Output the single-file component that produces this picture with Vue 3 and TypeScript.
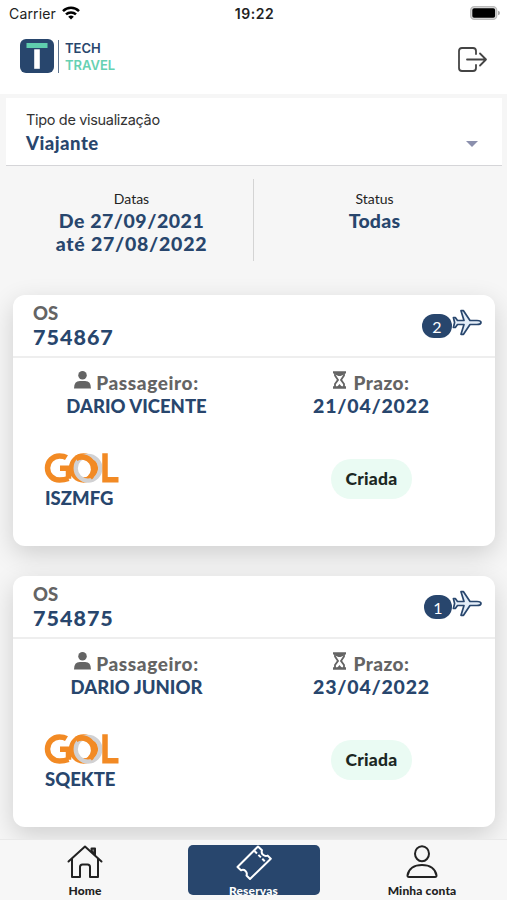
<script setup lang="ts">
interface Booking {
  os: string
  passenger: string
  deadline: string
  locator: string
  status: string
  flights: number
}

const bookings: Booking[] = [
  { os: '754867', passenger: 'DARIO VICENTE', deadline: '21/04/2022', locator: 'ISZMFG', status: 'Criada', flights: 2 },
  { os: '754875', passenger: 'DARIO JUNIOR', deadline: '23/04/2022', locator: 'SQEKTE', status: 'Criada', flights: 1 },
]
</script>

<template>
  <div class="screen">
    <div class="statusbar">
      <div class="carrier">
        <span>Carrier</span>
        <svg width="18" height="14" viewBox="0 0 18 14" fill="none" stroke="#000" stroke-width="2.5">
          <path d="M1 5.1a11.4 11.4 0 0 1 16 0M4 8.4a7.2 7.2 0 0 1 10 0" />
          <path d="M9 13.5 6.2 10.8a4 4 0 0 1 5.6 0z" fill="#000" stroke="none" />
        </svg>
      </div>
      <span class="time">19:22</span>
      <svg class="battery" width="30" height="14" viewBox="0 0 30 14">
        <rect x=".7" y=".7" width="26" height="12.6" rx="3.6" fill="#ddd" stroke="#bbb" stroke-width="1.3" />
        <rect x="2.3" y="2.3" width="22.8" height="9.4" rx="1.8" />
        <path d="M28 4.8q2 .4 2 2.2t-2 2.2z" fill="#aaa" />
      </svg>
    </div>

    <header class="header">
      <div class="brand">
        <svg width="34" height="34" viewBox="0 0 34 34">
          <rect width="34" height="34" rx="6" fill="#28466d" />
          <rect x="6.5" y="4" width="21" height="5" fill="#5fceae" />
          <rect x="14.2" y="10.3" width="5.6" height="19.5" fill="#fff" />
        </svg>
        <span class="brand-line"></span>
        <div class="brand-name"><span>TECH</span><span class="mint">TRAVEL</span></div>
      </div>
      <svg width="30" height="26" viewBox="0 0 30 26" fill="none" stroke="#444" stroke-width="1.8" stroke-linecap="round" stroke-linejoin="round">
        <path d="M18 7V4q0-3-3-3H4Q1 1 1 4v17q0 3 3 3h11q3 0 3-3v-3M9 12.5h19M22 6.5l6 6-6 6" />
      </svg>
    </header>

    <main class="content">
      <div class="select">
        <span class="select-label">Tipo de visualização</span>
        <div class="select-row"><strong>Viajante</strong><i class="caret"></i></div>
      </div>

      <div class="filters">
        <div class="filter">
          <span class="filter-label">Datas</span>
          <strong class="dates">De 27/09/2021</strong>
          <strong class="dates until">até 27/08/2022</strong>
        </div>
        <div class="filter">
          <span class="filter-label">Status</span>
          <strong class="all">Todas</strong>
        </div>
      </div>

      <div class="cards">
        <article v-for="b in bookings" :key="b.os" class="card">
          <div class="card-head">
            <div class="os"><span>OS</span><strong>{{ b.os }}</strong></div>
            <div class="flights">
              <span class="count" :class="{ single: b.flights === 1 }">{{ b.flights }}</span>
              <svg width="30" height="28" viewBox="0 0 30 28" fill="#e3edf8" stroke="#28466d" stroke-width="1.7" stroke-linejoin="round">
                <path d="M25 11.5h-7L11.5 1.7H9l3 9.8H5.5L3.3 8.5H1.4L2.6 13.5l-1.200 5h1.900l2.200-3H12l-3 9.800h2.500l6.500-9.800h7q4 0 4-2t-4-2z" />
              </svg>
            </div>
          </div>
          <div class="card-info">
            <div class="info">
              <span class="info-label">
                <svg width="17" height="18" viewBox="0 0 16 17" fill="#646464"><circle cx="8" cy="4.1" r="4" /><path d="M0 16.500q0-7 5.500-7h5Q16 9.500 16 16.500z" /></svg>
                Passageiro:
              </span>
              <strong class="passenger">{{ b.passenger }}</strong>
            </div>
            <div class="info">
              <span class="info-label">
                <svg width="13" height="18" viewBox="0 0 13 18" fill="none" stroke="#646464" stroke-width="1.800">
                  <path d="M0 1.300h13M0 16.500h13" stroke-width="2.300" /><path d="M2 1.500v3l3 4.400L2 13v3.500M11 1.500v3L8 8.900l3 4.100v3.500" /><path d="M3 2h7v2L7.500 5h-2L3 4zM4 16l2.500-3L9 16z" fill="#646464" stroke="none" />
                </svg>
                Prazo:
              </span>
              <strong class="deadline">{{ b.deadline }}</strong>
            </div>
          </div>
          <div class="card-foot">
            <div class="airline">
              <svg width="76" height="32" viewBox="0 0 76 32" fill="none" stroke-width="5.500" role="img" aria-label="Gol">
                <path d="M22.500 5.600Q20 4 15.500 4a12 12 0 0 0 0 24q5 0 9-1.500M16 16.300h8.500v10.500" stroke="#f28a24" />
                <circle cx="39.500" cy="16" r="11.900" stroke="#f28a24" />
                <circle cx="44" cy="16.300" r="12.300" stroke="#d1d1d3" stroke-width="4.300" />
                <path d="M32 6.500A11.900 11.900 0 0 1 46 25.500" stroke="#f28a24" />
                <path d="M61 1.200v26.500h13.500" stroke="#f28a24" />
              </svg>
              <strong>{{ b.locator }}</strong>
            </div>
            <div class="status-wrap"><span class="status">{{ b.status }}</span></div>
          </div>
        </article>
      </div>
    </main>

    <nav class="tabs">
      <a class="tab">
        <svg width="36" height="34" viewBox="0 0 36 34" fill="none" stroke="#222" stroke-width="2" stroke-linecap="round" stroke-linejoin="round">
          <path d="M1.500 16.500 18 1.500l16.500 15M5 14v18h8V22q0-2.500 2.500-2.500h5Q23 19.500 23 22v10h8V14" />
          <path d="M24.500 6V3.500H28v6z" fill="#777" />
        </svg>
        <span>Home</span>
      </a>
      <a class="tab active">
        <svg width="36" height="36" viewBox="0 0 36 36" fill="none" stroke="#fff" stroke-width="2" stroke-linejoin="round">
          <path d="M1.500 22 22 1.500l4 3.800q-1 3 1.100 4.500 2 1.700 4.600.8l3.100 3.100L14 34l-3.500-3.500q1-2.800-1-4.600T5 25.300z" />
          <path d="m18.500 6 11.500 11.500" stroke-dasharray="3.500 2" />
        </svg>
        <span>Reservas</span>
      </a>
      <a class="tab">
        <svg width="32" height="34" viewBox="0 0 32 34" fill="none" stroke="#222" stroke-width="2">
          <ellipse cx="16" cy="8.700" rx="7" ry="7.500" /><path d="M1.500 30.500C2.500 23.500 8.500 20 16 20s13.500 3.500 14.500 10.500q.2 1.500-1.500 1.500H3q-1.700 0-1.500-1.500z" />
        </svg>
        <span>Minha conta</span>
      </a>
    </nav>
  </div>
</template>

<style>
body { margin: 0; }
</style>

<style scoped>
.screen { width: 507px; height: 900px; display: flex; flex-direction: column; overflow: hidden; background: #f6f6f6; font-family: Lato, "Liberation Sans", sans-serif; color: #28466d; }
.screen * { box-sizing: border-box; }
svg { display: block; flex: none; }
.statusbar { height: 28px; flex: none; background: #fff; display: grid; grid-template-columns: 1fr auto 1fr; align-items: center; padding: 0 7px 0 9px; font: 14px/28px Inter, sans-serif; color: #222; }
.carrier { display: flex; align-items: center; gap: 6px; letter-spacing: .15px; }
.carrier svg { margin-bottom: 2px; }
.time { font-weight: 600; letter-spacing: .5px; }
.battery { justify-self: end; margin-bottom: 2px; }
.header { height: 66px; flex: none; background: #fff; display: flex; justify-content: space-between; align-items: flex-start; padding: 11px 19px 0 20px; }
.header > svg { margin-top: 8px; }
.brand { display: flex; }
.brand-line { width: 1px; height: 33px; background: #60758f; margin: 1px 6px 0 4px; }
.brand-name { display: flex; flex-direction: column; font: 600 13px/16.500px Inter, sans-serif; padding-top: 1px; }
.mint { color: #66d1b2; }
.content { flex: 1; min-height: 0; overflow: hidden; padding-top: 4px; }
.select { height: 68px; margin: 0 5px 0 6px; background: #fff; border-bottom: 1px solid #d5d5d8; padding: 12px 24px 0 20px; }
.select-label { display: block; font: 14.500px/20px Inter, sans-serif; color: #333; letter-spacing: -.33px; }
.select-row { display: flex; justify-content: space-between; align-items: center; font-size: 18.500px; line-height: 27px; }
.select-row strong { font-weight: 900; letter-spacing: .5px; }
.caret { border: 6px solid transparent; border-top-color: #8b90ad; border-bottom: 0; }
.filters { display: grid; grid-template-columns: 253px 1fr; height: 82px; margin-top: 13px; }
.filter { display: flex; flex-direction: column; align-items: center; padding: 9px 0 0 10px; font-size: 19.500px; line-height: 23px; }
.filter + .filter { border-left: 1px solid #d4d4d4; padding-left: 0; padding-right: 12px; }
.filter strong { font-weight: 900; }
.filter-label { font-size: 14px; line-height: 21px; color: #222; }
.dates { letter-spacing: .52px; }
.until { letter-spacing: .75px; }
.all { letter-spacing: .2px; }
.cards { display: flex; flex-direction: column; gap: 30px; padding: 34px 12px 0 13px; }
.card { height: 251px; flex: none; background: #fff; border-radius: 12px; box-shadow: 0 8px 26px rgba(0, 0, 0, .16); }
.card-head { height: 63px; border-bottom: 2px solid #eee; display: flex; justify-content: space-between; padding: 6px 13px 0 20px; }
.os { display: flex; flex-direction: column; line-height: 25px; }
.os span { font-size: 18.500px; line-height: 24px; color: #646464; font-weight: 900; }
.os strong { font-size: 21.500px; font-weight: 900; letter-spacing: 1px; }
.flights { display: flex; align-items: flex-start; padding-top: 8px; }
.count { width: 30px; height: 24px; border-radius: 12px; margin-top: 5px; background: #28466d; color: #fff; text-align: center; font-size: 16px; line-height: 25px; }
.count.single { width: 28px; }
.card-info { display: grid; grid-template-columns: 247px 1fr; padding-top: 12px; }
.info { display: flex; flex-direction: column; align-items: center; line-height: 24px; }
.info + .info { padding-right: 12px; }
.info-label { display: flex; gap: 5px; font-size: 19px; font-weight: 900; line-height: 26px; color: #646464; letter-spacing: .6px; height: 24px; }
.info + .info .info-label { gap: 7px; letter-spacing: .5px; }
.info-label svg { margin-top: 1px; }
.passenger { font-size: 18.500px; font-weight: 900; }
.deadline { font-size: 19.500px; font-weight: 900; letter-spacing: .8px; }
.card-foot { display: grid; grid-template-columns: 247px 1fr; padding-top: 33px; }
.airline { padding-left: 31px; font-size: 18.500px; line-height: 25px; }
.airline svg { margin: 1px 0 2px; }
.airline strong { font-weight: 900; padding-left: 1px; }
.status-wrap { text-align: center; padding: 8px 12px 0 0; }
.status { display: inline-block; width: 81px; height: 40px; border-radius: 20px; background: #eafbf3; color: #1b2723; font-size: 17.500px; letter-spacing: .2px; font-weight: 900; line-height: 39px; }
.tabs { height: 61px; flex: none; background: #f7f7f7; border-top: 1px solid #e9e9e9; position: relative; display: grid; grid-template-columns: 132px 132px 132px; justify-content: space-between; padding: 5px 19px 0 19px; }
.tab { display: flex; flex-direction: column; align-items: center; height: 50px; font-size: 12px; letter-spacing: .15px; font-weight: 900; line-height: 14px; color: #222; gap: 5px; white-space: nowrap; }
.tab.active { background: #28466d; color: #fff; border-radius: 5px; overflow: hidden; gap: 3px; }
</style>
